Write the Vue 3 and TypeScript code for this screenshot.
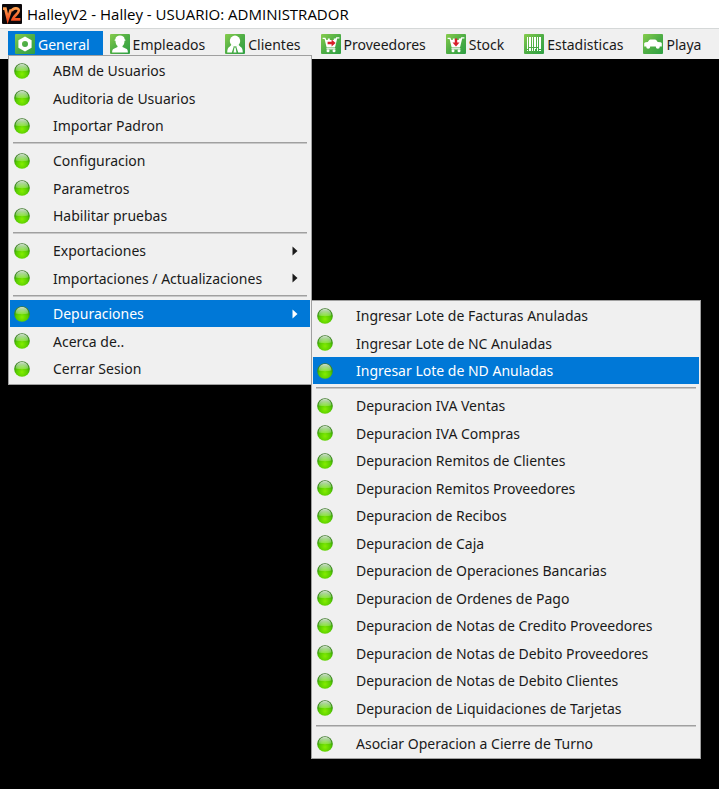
<script setup lang="ts">
interface MenuEntry {
  label: string
  active?: boolean
  arrow?: boolean
  children?: MenuEntry[][]
}

interface BarEntry {
  label: string
  icon: string
  active?: boolean
}

const bar: BarEntry[] = [
  { label: 'General', icon: 'nut', active: true },
  { label: 'Empleados', icon: 'worker' },
  { label: 'Clientes', icon: 'person' },
  { label: 'Proveedores', icon: 'cart-in' },
  { label: 'Stock', icon: 'cart-down' },
  { label: 'Estadisticas', icon: 'barcode' },
  { label: 'Playa', icon: 'car' },
]

const purge: MenuEntry[][] = [
  [
    { label: 'Ingresar Lote de Facturas Anuladas' },
    { label: 'Ingresar Lote de NC Anuladas' },
    { label: 'Ingresar Lote de ND Anuladas', active: true },
  ],
  [
    { label: 'Depuracion IVA Ventas' },
    { label: 'Depuracion IVA Compras' },
    { label: 'Depuracion Remitos de Clientes' },
    { label: 'Depuracion Remitos Proveedores' },
    { label: 'Depuracion de Recibos' },
    { label: 'Depuracion de Caja' },
    { label: 'Depuracion de Operaciones Bancarias' },
    { label: 'Depuracion de Ordenes de Pago' },
    { label: 'Depuracion de Notas de Credito Proveedores' },
    { label: 'Depuracion de Notas de Debito Proveedores' },
    { label: 'Depuracion de Notas de Debito Clientes' },
    { label: 'Depuracion de Liquidaciones de Tarjetas' },
  ],
  [{ label: 'Asociar Operacion a Cierre de Turno' }],
]

const general: MenuEntry[][] = [
  [{ label: 'ABM de Usuarios' }, { label: 'Auditoria de Usuarios' }, { label: 'Importar Padron' }],
  [{ label: 'Configuracion' }, { label: 'Parametros' }, { label: 'Habilitar pruebas' }],
  [
    { label: 'Exportaciones', arrow: true },
    { label: 'Importaciones / Actualizaciones', arrow: true },
  ],
  [
    { label: 'Depuraciones', arrow: true, active: true, children: purge },
    { label: 'Acerca de..' },
    { label: 'Cerrar Sesion' },
  ],
]
</script>

<template>
  <div class="app">
    <svg class="defs" width="0" height="0" aria-hidden="true">
      <defs>
        <linearGradient id="tile" x1="0" y1="0" x2="1" y2="1">
          <stop offset="0" stop-color="#86cc4c" />
          <stop offset="0.5" stop-color="#4fae45" />
          <stop offset="1" stop-color="#2fa044" />
        </linearGradient>
        <radialGradient id="orb" cx="0.5" cy="0.7" r="0.66">
          <stop offset="0" stop-color="#84ee00" />
          <stop offset="0.55" stop-color="#58cc00" />
          <stop offset="0.8" stop-color="#349a08" />
          <stop offset="1" stop-color="#3f7a2c" />
        </radialGradient>
        <linearGradient id="gloss" x1="0" y1="0" x2="0" y2="1">
          <stop offset="0" stop-color="#ffffff" stop-opacity="0.75" />
          <stop offset="1" stop-color="#ffffff" stop-opacity="0.22" />
        </linearGradient>
        <linearGradient id="flame" gradientUnits="userSpaceOnUse" x1="0" y1="3" x2="0" y2="17">
          <stop offset="0" stop-color="#ffa552" />
          <stop offset="1" stop-color="#f0481c" />
        </linearGradient>
      </defs>
    </svg>

    <header class="title">
      <svg class="logo" viewBox="0 0 20 20" aria-hidden="true">
        <rect width="20" height="20" rx="1" fill="#0b0709" />
        <path d="M1 4.600H3.400L5.800 15 9 5.400" fill="none" stroke="url(#flame)" stroke-width="2.800" />
        <path d="M9.600 7C11 3.800 17 3.200 16.800 6.800C16.600 9.800 12 11.400 10.600 15.400H18.400" fill="none" stroke="url(#flame)" stroke-width="2.600" />
      </svg>
      <h1>HalleyV2 - Halley - USUARIO: ADMINISTRADOR</h1>
    </header>

    <nav class="bar">
      <div v-for="b in bar" :key="b.label" class="slot">
        <button type="button" class="top" :class="{ active: b.active }">
          <svg class="tile" viewBox="0 0 20 20" aria-hidden="true">
            <rect width="20" height="20" rx="1" fill="url(#tile)" />
            <path v-if="b.icon === 'nut'" fill="#fff" fill-rule="evenodd" d="M10 2.400l6.600 3.800v7.600L10 17.600l-6.600-3.800V6.200zM10 7a3 3 0 1 0 0 6a3 3 0 1 0 0-6z" />
            <path v-else-if="b.icon === 'worker'" fill="#fff" d="M5.400 5.200C5.400 2.600 7.600 1.400 10 1.400s4.600 1.200 4.600 3.800l.8.600v1h-.9c0 2.800-1 4.500-2 5.300v1l4.200 1.800c.8.400 1.200 2 1.200 3.500H2.100c0-1.500.4-3.100 1.200-3.500l4.200-1.800v-1C6.500 11.300 5.500 9.600 5.500 6.800h-.9v-1z" />
            <g v-else-if="b.icon === 'person'" fill="#fff">
              <ellipse cx="10" cy="7" rx="5.200" ry="5.400" />
              <path d="M6.800 10.600 8.800 12.600 6.800 18.600H2.200C2.200 15.600 3 13.600 4.600 12.800z" />
              <path d="M13.200 10.600 11.200 12.600 13.200 18.600H17.800C17.800 15.600 17 13.600 15.400 12.800z" />
              <path d="M9.500 13.400h1l1 5.200H8.500z" />
            </g>
            <g v-else-if="b.icon === 'cart-in' || b.icon === 'cart-down'">
              <path fill="#fff" d="M1.600 3.800h2.800l1 2.200h1.400V4.600h2V6h4V4.600h1.800l.6-1.400h3.200v1.200h-2.200L14 13.600H5.600L3.600 5H1.600z" />
              <path fill="#fff" d="M5.400 14.200h9v1.200h-9z" />
              <circle cx="7" cy="16.800" r="1.500" fill="#fff" />
              <circle cx="13" cy="16.800" r="1.500" fill="#fff" />
              <path v-if="b.icon === 'cart-in'" fill="#d81f2a" d="M6.600 7.800h4V5.600l4 3.400-4 3.400v-2.200h-4z" />
              <path v-else fill="#d81f2a" d="M8.800 4.600h2.400v3.800h2.300L10 12.600 6.500 8.400h2.300z" />
            </g>
            <g v-else-if="b.icon === 'barcode'" fill="#fff">
              <path d="M3 3h1v12H3zM5 3h2v10H5zM8 3h1v10H8zM10 3h2v10h-2zM13 3h1v10h-1zM15 3h2v12h-2z" />
              <path d="M5 14h2v3H5zM8 14h1v3H8zM10 14h2v1h-1v2h-1zM13 14h1v3h-1zM3 16h1v1H3zM15 16h2v1h-2z" />
            </g>
            <g v-else fill="#fff">
              <path d="M1.200 9.600c0-.8.600-1.200 1.400-1.300l2.200-.3 1.400-2c.3-.4.700-.6 1.200-.6h4.600c.5 0 .9.200 1.200.6l1.500 2 2.900.3c.8.100 1.200.6 1.200 1.300v2.800H1.200z" />
              <circle cx="5.200" cy="12.800" r="2" />
              <circle cx="14.800" cy="12.800" r="2" />
            </g>
          </svg>
          <span>{{ b.label }}</span>
        </button>

        <div v-if="b.active" class="menu main" role="menu">
          <ul v-for="(group, g) in general" :key="g">
            <li v-for="m in group" :key="m.label">
              <button type="button" role="menuitem" class="item" :class="{ active: m.active }">
                <svg class="orb" viewBox="0 0 16 16" aria-hidden="true">
                  <circle cx="8" cy="8" r="7.800" fill="url(#orb)" />
                  <path d="M1.600 7.600C1.600 3.400 4.400 1 8 1s6.400 2.400 6.400 6.600C11 8.400 5 8.400 1.600 7.600z" fill="url(#gloss)" />
                </svg>
                <span>{{ m.label }}</span>
                <svg v-if="m.arrow" class="arrow" viewBox="0 0 6 10" aria-hidden="true">
                  <path d="M0.500 0.500 5.500 5 0.500 9.500z" fill="currentColor" />
                </svg>
              </button>
              <div v-if="m.children" class="menu sub" role="menu">
                <ul v-for="(sg, s) in m.children" :key="s">
                  <li v-for="c in sg" :key="c.label">
                    <button type="button" role="menuitem" class="item" :class="{ active: c.active }">
                      <svg class="orb" viewBox="0 0 16 16" aria-hidden="true">
                        <circle cx="8" cy="8" r="7.800" fill="url(#orb)" />
                        <path d="M1.600 7.600C1.600 3.400 4.400 1 8 1s6.400 2.400 6.400 6.600C11 8.400 5 8.400 1.600 7.600z" fill="url(#gloss)" />
                      </svg>
                      <span>{{ c.label }}</span>
                    </button>
                  </li>
                </ul>
              </div>
            </li>
          </ul>
        </div>
      </div>
    </nav>
  </div>
</template>

<style>
body {
  margin: 0;
  background: #000;
}
</style>

<style scoped>
.app {
  min-height: 100vh;
  background: #000;
  color: #1a1a1a;
  font-family: 'Noto Sans', 'Open Sans', sans-serif;
  font-size: 14px;
}

.defs {
  position: absolute;
}

.title {
  display: flex;
  align-items: center;
  gap: 5px;
  height: 28px;
  padding-left: 2px;
  background: #fff;
  color: #000;
}

.title h1 {
  margin: 0;
  font-family: 'Open Sans', 'Noto Sans', sans-serif;
  font-size: 15px;
  font-weight: 400;
  line-height: 20px;
  white-space: nowrap;
}

.logo {
  width: 20px;
  height: 20px;
}

.bar {
  display: flex;
  box-sizing: border-box;
  height: 31px;
  padding: 2px 0 2px 8px;
  border-top: 1px solid #d5d8d8;
  background: #f0f0f0;
}

.slot {
  position: relative;
  display: flex;
}

.top {
  display: flex;
  align-items: center;
  gap: 3px;
  padding: 0 13px 0 7px;
  border: 0;
  background: none;
  color: inherit;
  font: inherit;
  white-space: nowrap;
}

.tile {
  width: 20px;
  height: 20px;
}

.top.active {
  background: #0078d7;
  color: #fff;
}

.menu {
  position: absolute;
  box-sizing: border-box;
  padding: 1px;
  border: 1px solid #a0a0a0;
  background: #f0f0f0;
}

.main {
  top: 24px;
  left: 0;
  width: 304px;
  padding-bottom: 2px;
}

.sub {
  top: 0;
  left: calc(100% + 1px);
  width: 390px;
}

.menu ul {
  margin: 0;
  padding: 0;
  list-style: none;
}

.menu ul + ul::before {
  content: '';
  display: block;
  height: 2px;
  margin: 3px;
  background: linear-gradient(#a0a0a0 50%, #c8c8c8 50%);
}

.menu li {
  position: relative;
}

.item {
  display: flex;
  align-items: center;
  box-sizing: border-box;
  width: 100%;
  height: 27px;
  padding: 0 12px 0 4px;
  border: 0;
  color: #1a1a1a;
  background: none;
  font: inherit;
  text-align: left;
  white-space: nowrap;
}

li:nth-child(even) > .item {
  height: 28px;
}

.item.active {
  background: #0078d7;
  color: #fff;
}

.orb {
  width: 16px;
  height: 16px;
  margin-right: 23px;
}

.arrow {
  width: 6px;
  height: 10px;
  margin-left: auto;
}
</style>
